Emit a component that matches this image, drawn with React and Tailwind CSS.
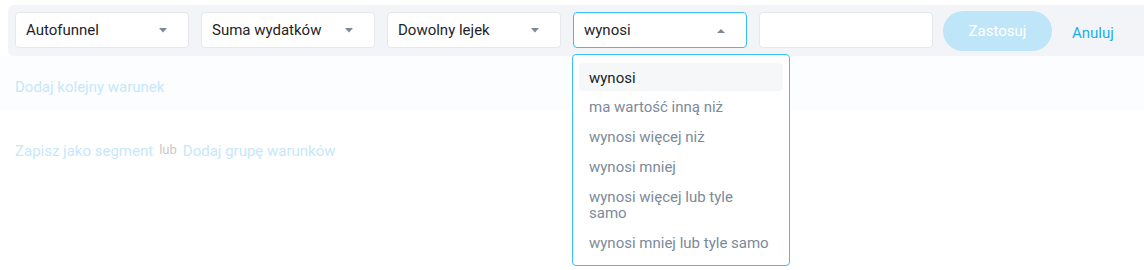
import React from "react";

function Caret({ up }) {
  return (
    <svg width="10" height="5" viewBox="0 0 10 5" className="shrink-0">
      {up ? (
        <path d="M1 5 L5 1 L9 5 Z" fill="#7b8898" />
      ) : (
        <path d="M1 0 L9 0 L5 4.5 Z" fill="#7b8898" />
      )}
    </svg>
  );
}

function Select({ label, active, children }) {
  return (
    <div className="relative">
      <div
        className={
          "w-[174px] h-[36px] rounded-[4px] bg-white flex items-center justify-between pl-[10px] pr-[20px] border " +
          (active ? "border-[#35c2f4]" : "border-[#e6e8ec]")
        }
      >
        <span className="text-[15px] text-[#1e2329]">{label}</span>
        <Caret up={active} />
      </div>
      {children}
    </div>
  );
}

const options = [
  "wynosi",
  "ma wartość inną niż",
  "wynosi więcej niż",
  "wynosi mniej",
  "wynosi więcej lub tyle samo",
  "wynosi mniej lub tyle samo",
];

export default function App() {
  return (
    <div className="w-[1144px] h-[270px] bg-white pt-[5px]" style={{ fontFamily: "Roboto, 'Liberation Sans', sans-serif" }}>
      <div className="ml-2 rounded-l-[6px] bg-[#f3f4f7] h-[51px] flex items-start pl-[7px] pt-[7px] gap-3">
        <Select label="Autofunnel" />
        <Select label="Suma wydatków" />
        <Select label="Dowolny lejek" />
        <Select label="wynosi" active>
          <div className="absolute z-10 left-[-1px] top-[42px] w-[218px] rounded-[4px] border border-[#35c2f4] bg-white px-[6px] pt-[8px] pb-[8px]">
            {options.map((o, i) => (
              <div
                key={o}
                className={
                  "rounded-[4px] pl-[10px] pr-[14px] py-[6px] text-[15px] leading-[16px] " +
                  (i === 0 ? "bg-[#f5f7f9] text-[#1a1f24] pt-[7px] pb-[5px]" : "text-[#7c8a9b] mt-[2px]")
                }
              >
                {o}
              </div>
            ))}
          </div>
        </Select>
        <div className="w-[174px] h-[36px] rounded-[4px] bg-white border border-[#e6e8ec]" />
        <button className="w-[109px] h-[40px] -mt-[1px] -ml-[2px] rounded-full bg-[#bfe5f9] text-white text-[15px]">
          Zastosuj
        </button>
        <span className="ml-[8px] mt-[10px] text-[15px] text-[#1aaef0]">Anuluj</span>
      </div>
      <div className="h-[54px] bg-[#fcfdfe] flex items-start pt-[20px] pl-[15px]">
        <span className="text-[15px] text-[#c6e7fb]">Dodaj kolejny warunek</span>
      </div>
      <div className="pl-[15px] pt-[30px] flex items-center gap-[6px]">
        <span className="text-[15px] text-[#c6e7fb]">Zapisz jako segment</span>
        <span className="text-[13px] text-[#c9c9c9] -mt-[4px]">lub</span>
        <span className="text-[15px] text-[#c6e7fb]">Dodaj grupę warunków</span>
      </div>
    </div>
  );
}
